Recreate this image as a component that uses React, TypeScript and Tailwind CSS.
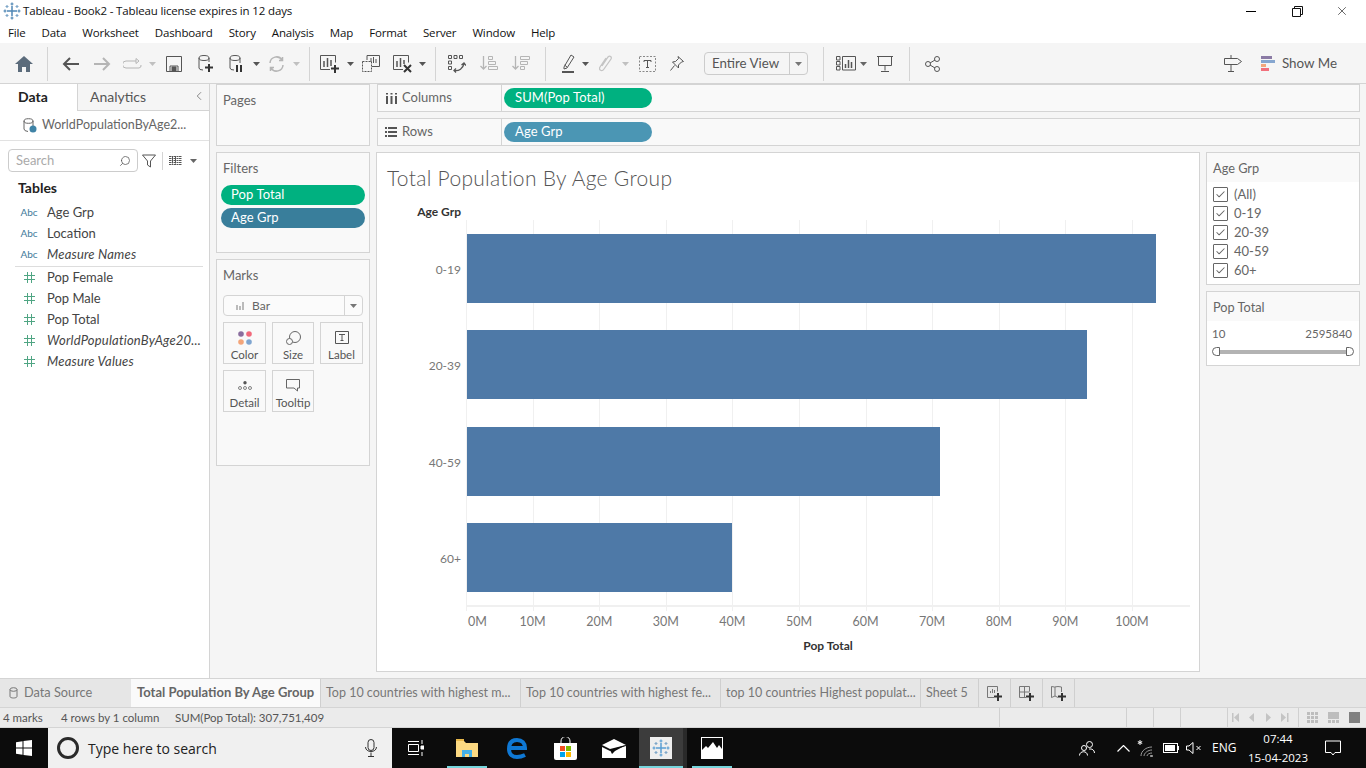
import type { ReactNode } from "react";
import { Check, ChevronLeft, Search, X } from "lucide-react";

const lato = { fontFamily: "Lato, sans-serif" };

const menuItems = ["File", "Data", "Worksheet", "Dashboard", "Story", "Analysis", "Map", "Format", "Server", "Window", "Help"];

const dims = [
  { name: "Age Grp" },
  { name: "Location" },
  { name: "Measure Names", italic: true },
];
const measures = [
  { name: "Pop Female" },
  { name: "Pop Male" },
  { name: "Pop Total" },
  { name: "WorldPopulationByAge20...", italic: true },
  { name: "Measure Values", italic: true },
];

const bars = [
  { label: "0-19", width: 689 },
  { label: "20-39", width: 620 },
  { label: "40-59", width: 473 },
  { label: "60+", width: 265 },
];
const ticks = ["0M", "10M", "20M", "30M", "40M", "50M", "60M", "70M", "80M", "90M", "100M"];

const dark = "#555555";
const faded = "#b5b5b5";

function Svg({ w = 20, h = 20, children }: { w?: number; h?: number; children: ReactNode }) {
  return (
    <svg width={w} height={h} viewBox={`0 0 ${w} ${h}`} fill="none" stroke={dark} strokeWidth="1">
      {children}
    </svg>
  );
}

function Tool({ className, children }: { className: string; children?: ReactNode }) {
  return <div className={`flex shrink-0 items-center justify-center ${className}`}>{children}</div>;
}

function Caret({ color = "#777777" }: { color?: string }) {
  return (
    <svg width="7" height="4" viewBox="0 0 7 4">
      <path d="M0 0h7L3.5 4z" fill={color} />
    </svg>
  );
}

function Sep() {
  return <div className="h-[34px] w-px shrink-0 bg-[#d4d4d4]" />;
}

function Plus({ x, y }: { x: number; y: number }) {
  return <path d={`M${x} ${y + 3.5}h8M${x + 4} ${y}v8`} stroke="#333333" strokeWidth="2" />;
}

function TableauLogo({ size = 18, color = "#4f87b5" }: { size?: number; color?: string }) {
  return (
    <svg width={size} height={size} viewBox="0 0 18 18" stroke={color} strokeWidth="1.2" fill="none">
      <path d="M9 4v10M4 9h10" strokeWidth="1.5" />
      <path d="M9 0.5v3M7.5 2h3M9 14.5v3M7.5 16h3M0.5 9h3M2 7.5v3M14.5 9h3M16 7.5v3" />
      <path d="M4 3v3M2.5 4.5h3M14 3v3M12.5 4.5h3M4 12v3M2.5 13.5h3M14 12v3M12.5 13.5h3" stroke="#7fa7c9" />
    </svg>
  );
}

function Pill({ color, label, className }: { color: string; label: string; className: string }) {
  return (
    <div className={`flex h-5 items-center rounded-full text-[13px] tracking-[0.1px] text-white ${color} ${className}`}>
      {label}
    </div>
  );
}

function Card({ title, className, children }: { title: string; className: string; children?: ReactNode }) {
  return (
    <div className={`shrink-0 border border-[#d4d4d4] bg-[#f9f9f9] ${className}`}>
      <div className="pl-[6px] pt-[7px] text-[13px] leading-4 text-[#666666]">{title}</div>
      {children}
    </div>
  );
}

function MarkButton({ label, className, children }: { label: string; className: string; children: ReactNode }) {
  return (
    <div className={`flex h-[42px] flex-col items-center border border-[#d4d4d4] ${className}`}>
      <div className="flex h-[26px] items-center pt-[3px]">{children}</div>
      <div className="text-[11.5px] leading-3 text-[#555555]">{label}</div>
    </div>
  );
}

function Shelf({ icon, label, pill, color }: { icon: ReactNode; label: string; pill: string; color: string }) {
  return (
    <div className="flex h-7 items-center border border-[#d4d4d4] bg-[#f9f9f9]">
      <div className="flex w-[124px] shrink-0 items-center self-stretch border-r border-[#d4d4d4]">
        <div className="flex w-[24px] justify-center pl-[2px]">{icon}</div>
        <span className="text-[13px] text-[#666666]">{label}</span>
      </div>
      <Pill color={color} label={pill} className="ml-[2px] w-[148px] pl-[11px]" />
    </div>
  );
}

function FieldRow({ name, italic, kind }: { name: string; italic?: boolean; kind: "abc" | "num" }) {
  return (
    <div className="flex h-[21px] items-center">
      <div className="flex w-[47px] justify-center pl-[18px] pr-[7px]">
        {kind === "abc" ? (
          <span className="text-[10px] text-[#3f7a9a]">Abc</span>
        ) : (
          <svg width="11" height="11" viewBox="0 0 11 11" stroke="#4fa583" strokeWidth="1">
            <path d="M3.5 0v11M7.5 0v11M0 3.5h11M0 7.5h11" />
          </svg>
        )}
      </div>
      <span className={`text-[13px] text-[#444444] ${italic ? "italic tracking-[0.2px]" : ""}`}>{name}</span>
    </div>
  );
}

function Sheet({ label, className }: { label: string; className: string }) {
  return (
    <div className={`flex shrink-0 items-center whitespace-nowrap border-r border-[#cfcfcf] pl-[5px] text-[12.5px] text-[#777777] ${className}`}>
      {label}
    </div>
  );
}

function AddTab({ children }: { children: ReactNode }) {
  return <div className="flex w-[32px] shrink-0 items-center justify-center border-r border-[#cfcfcf]">{children}</div>;
}

function StatusCell({ className }: { className: string }) {
  return <div className={`shrink-0 self-stretch border-r border-[#d0d0d0] ${className}`} />;
}

export default function App() {
  return (
    <div className="flex h-screen w-full flex-col overflow-hidden bg-white" style={lato}>
      {/* window title */}
      <div className="flex h-[22px] shrink-0 items-center bg-white" style={{ fontFamily: "'Open Sans', sans-serif" }}>
        <div className="ml-[3px] mr-[2px]">
          <TableauLogo size={18} />
        </div>
        <span className="text-[11.5px] tracking-[-0.15px] text-[#111111]">Tableau - Book2 - Tableau license expires in 12 days</span>
        <div className="ml-auto flex items-center text-black">
          <div className="flex w-[46px] justify-center">
            <div className="h-px w-[10px] bg-black" />
          </div>
          <div className="flex w-[46px] justify-center">
            <svg width="11" height="11" viewBox="0 0 11 11" fill="none" stroke="#111111">
              <path d="M0.5 2.5h8v8h-8zM2.5 2.5v-2h8v8h-2" />
            </svg>
          </div>
          <div className="flex w-[46px] justify-center pr-[2px]">
            <X size={14} strokeWidth={1} />
          </div>
        </div>
      </div>

      {/* menu */}
      <div className="flex h-[21px] shrink-0 items-center gap-[16px] bg-white pl-2 text-[11.5px] tracking-[-0.15px] text-[#111111]" style={{ fontFamily: "'Open Sans', sans-serif" }}>
        {menuItems.map((item) => (
          <span key={item}>{item}</span>
        ))}
      </div>

      {/* toolbar */}
      <div className="flex h-[41px] shrink-0 items-center border-b border-[#d4d4d4] bg-[#f5f5f5] pt-px">
        <Tool className="w-[47px]">
          <svg width="18" height="16" viewBox="0 0 18 16">
            <path d="M9 0L0 8h3v8h4v-5h4v5h4V8h3z" fill="#5b6b7b" />
          </svg>
        </Tool>
        <Sep />
        <Tool className="ml-[6px] w-[32px]">
          <svg width="17" height="14" viewBox="0 0 17 14" fill="none" stroke="#555555" strokeWidth="2">
            <path d="M17 7H2M8 1L2 7l6 6" />
          </svg>
        </Tool>
        <Tool className="w-[32px]">
          <svg width="17" height="14" viewBox="0 0 17 14" fill="none" stroke={faded} strokeWidth="2">
            <path d="M0 7h15M9 1l6 6-6 6" />
          </svg>
        </Tool>
        <Tool className="w-[28px]">
          <svg width="19" height="12" viewBox="0 0 19 12" fill="none" stroke={faded}>
            <path d="M13 3H3a2.5 2.5 0 000 7h13a2.5 2.5 0 002-3M13 0.5v5l3-2.5z" />
          </svg>
        </Tool>
        <Tool className="w-[12px]">
          <Caret color="#c0c0c0" />
        </Tool>
        <Tool className="w-[32px]">
          <Svg w={16} h={16}>
            <path d="M0.5 0.5h15v15h-15zM4 15v-5h8v5" />
            <path d="M6 11h4v4H6z" fill={dark} />
          </Svg>
        </Tool>
        <Tool className="w-[32px]">
          <Svg w={16} h={18}>
            <ellipse cx="6" cy="3" rx="5" ry="2.5" />
            <path d="M1 3v10q0 2 4 2M11 3v4" />
            <Plus x={7} y={9} />
          </Svg>
        </Tool>
        <Tool className="w-[30px]">
          <Svg w={16} h={18}>
            <ellipse cx="6" cy="3" rx="5" ry="2.5" />
            <path d="M1 3v10q0 2 4 2M11 3v5" />
            <path d="M8 10v7M12 10v7" stroke="#333333" strokeWidth="2" />
          </Svg>
        </Tool>
        <Tool className="w-[8px]">
          <Caret color="#555555" />
        </Tool>
        <Tool className="w-[32px]">
          <svg width="17" height="16" viewBox="0 0 17 16" fill="none" stroke={faded} strokeWidth="1.5">
            <path d="M2 7a6.5 6.5 0 0112-3M15 9a6.5 6.5 0 01-12 3M14.5 1v3.5H11M2.500 15v-3.500H6" />
          </svg>
        </Tool>
        <Tool className="w-[8px]">
          <Caret color="#c0c0c0" />
        </Tool>
        <div className="w-[9px] shrink-0" />
        <Sep />
        <Tool className="ml-[4px] w-[32px]">
          <Svg w={20} h={18}>
            <path d="M10 14.500H0.500V0.500h15v7" />
            <path d="M4 6v6M7.500 3v9M11 5v6" strokeWidth="1.500" />
            <Plus x={11} y={10} />
          </Svg>
        </Tool>
        <Tool className="w-[8px]">
          <Caret color="#555555" />
        </Tool>
        <Tool className="w-[34px]">
          <Svg w={18} h={17}>
            <path d="M5 5V0.500h12.500v11H10" />
            <path d="M0.500 6.500h9v10h-9z" strokeDasharray="2 1" />
            <path d="M9 7V3M11.500 8V2M14 8V4" />
          </Svg>
        </Tool>
        <Tool className="w-[28px]">
          <Svg w={19} h={18}>
            <path d="M10 14.500H0.500V0.500h15v7" />
            <path d="M4 6v6M7.500 3v9M11 5v4" strokeWidth="1.500" />
            <path d="M11 10l7 7M18 10l-7 7" stroke="#333333" strokeWidth="2" />
          </Svg>
        </Tool>
        <Tool className="w-[12px]">
          <Caret color="#555555" />
        </Tool>
        <div className="w-[7px] shrink-0" />
        <Sep />
        <Tool className="ml-[5px] w-[32px]">
          <Svg w={18} h={18}>
            <path d="M0.500 0.500h3v3h-3zM6 0.500h3v3H6zM11.500 0.500h3v3h-3zM0.500 6h3v3h-3zM0.500 11.500h3v3h-3z" />
            <path d="M6 15.500c5 1 9-2 10-7M13.500 10l2.500-2 2 2.500M8 13.500l-2 2 2 2" strokeWidth="1.300" />
          </Svg>
        </Tool>
        <Tool className="w-[32px]">
          <Svg w={18} h={15}>
            <path d="M3.500 0v12M0.500 10l3 3 3-3" stroke={faded} strokeWidth="1.300" />
            <path d="M8.500 0.500h4v3h-4zM8.500 5.500h7v3h-7zM8.500 10.500h9v3h-9z" stroke={faded} />
          </Svg>
        </Tool>
        <Tool className="w-[32px]">
          <Svg w={18} h={15}>
            <path d="M3.500 0v12M0.500 10l3 3 3-3" stroke={faded} strokeWidth="1.300" />
            <path d="M8.500 0.500h9v3h-9zM8.500 5.500h7v3h-7zM8.500 10.500h4v3h-4z" stroke={faded} />
          </Svg>
        </Tool>
        <div className="w-[8px] shrink-0" />
        <Sep />
        <Tool className="ml-[10px] w-[24px]">
          <svg width="13" height="19" viewBox="0 0 13 19" fill="none" stroke="#555555">
            <path d="M2 13L9 1l3 2-7 11-3 1zM2.500 11l2.500 2" />
            <path d="M0 18h12" strokeWidth="2" />
          </svg>
        </Tool>
        <Tool className="w-[10px]">
          <Caret color="#555555" />
        </Tool>
        <Tool className="w-[30px]">
          <svg width="13" height="17" viewBox="0 0 13 17" fill="none" stroke="#c4c4c4" strokeWidth="1.300">
            <path d="M3 11l6-9c2-2 4 0 3 2l-7 10c-2 3-6 1-4-2l6-9" />
          </svg>
        </Tool>
        <Tool className="w-[10px]">
          <Caret color="#c0c0c0" />
        </Tool>
        <Tool className="w-[34px]">
          <svg width="17" height="16" viewBox="0 0 17 16" fill="none" stroke="#888888">
            <path d="M0.500 0.500h16v15h-16z" strokeDasharray="2 1.500" />
            <path d="M5 4.500h7M8.500 4.500v7M7 11.500h3M5 4.500v1.500M12 4.500v1.500" stroke="#555555" />
          </svg>
        </Tool>
        <Tool className="w-[26px]">
          <svg width="14" height="15" viewBox="0 0 14 15" fill="none" stroke="#555555">
            <path d="M8 0.500l5.500 5-2 .500-3 3 0 3-6-6 3-.5 3-3zM4.500 9.500L0.500 14.500" />
          </svg>
        </Tool>
        <div className="ml-[14px] flex h-[23px] w-[104px] shrink-0 items-center rounded-sm border border-[#cccccc]">
          <span className="flex-1 pl-[7px] text-[13.3px] text-[#555555]">Entire View</span>
          <div className="flex h-full w-[18px] items-center justify-center border-l border-[#cccccc]">
            <Caret />
          </div>
        </div>
        <div className="w-[15px] shrink-0" />
        <Sep />
        <Tool className="ml-[10px] w-[24px]">
          <Svg w={20} h={15}>
            <path d="M0.500 0.500h3.500v3.500H0.500zM0.500 5.500h3.500V9H0.500zM0.500 10.500h3.500V14H0.500zM6.500 0.500h13v13.500h-13z" />
            <path d="M9.500 8v4M12.500 4v8M15.500 6v6" strokeWidth="1.500" />
          </Svg>
        </Tool>
        <Tool className="w-[10px]">
          <Caret color="#666666" />
        </Tool>
        <Tool className="w-[34px]">
          <Svg w={16} h={16}>
            <path d="M0 0.500h16M1.500 0.500v9h13v-9M8 9.500v5M4 15.500h8" />
          </Svg>
        </Tool>
        <div className="w-[7px] shrink-0" />
        <Sep />
        <Tool className="ml-[6px] w-[32px]">
          <Svg w={15} h={16}>
            <circle cx="3" cy="8" r="2.500" />
            <circle cx="12" cy="3" r="2.500" />
            <circle cx="12" cy="13" r="2.500" />
            <path d="M5 7l5-3M5 9l5 3" />
          </Svg>
        </Tool>
        <Tool className="ml-auto w-[20px]">
          <Svg w={18} h={17}>
            <path d="M0.500 3.500h13l4 3-4 3h-13zM7 0v3M7 9.500v7M4 16.500h6" />
          </Svg>
        </Tool>
        <div className="ml-[18px] flex flex-col gap-[1px]">
          <div className="h-[3px] w-[11px] bg-[#8b7ba5]" />
          <div className="h-[3px] w-[14px] bg-[#86a6cf]" />
          <div className="h-[3px] w-[5px] bg-[#f3a77c]" />
          <div className="h-[3px] w-[8px] bg-[#f2707c]" />
        </div>
        <span className="ml-[7px] mr-[29px] text-[13.4px] text-[#555555]">Show Me</span>
      </div>

      {/* body */}
      <div className="flex min-h-0 flex-1 bg-[#f5f5f5]">
        {/* data pane */}
        <div className="w-[210px] shrink-0 border-r border-[#d4d4d4] bg-white">
          <div className="flex h-[27px] bg-[#f5f5f5]">
            <div className="flex w-[77px] items-center bg-white pb-[2px] pl-[18px] text-[14px] font-bold text-[#222222]">Data</div>
            <div className="flex flex-1 items-center border-b border-l border-[#d4d4d4] pb-[2px] pl-[12px] text-[14px] text-[#555555]">
              Analytics
              <ChevronLeft size={14} strokeWidth={1.300} className="ml-auto mr-[3px] text-[#666666]" />
            </div>
          </div>
          <div className="flex h-[30px] items-center border-b border-[#e2e2e2] pl-[23px]">
            <svg width="14" height="15" viewBox="0 0 14 15" fill="none" stroke="#666666">
              <ellipse cx="5.500" cy="3" rx="4.500" ry="2.300" />
              <path d="M1 3v8q0 2 4 2.500M10 3v5" />
              <circle cx="10" cy="11" r="3.500" fill="#3f83a6" stroke="none" />
            </svg>
            <span className="ml-[5px] text-[12.5px] text-[#666666]">WorldPopulationByAge2...</span>
          </div>
          <div className="ml-2 mt-[8px] flex h-[23px] items-center">
            <div className="flex h-[23px] w-[130px] items-center rounded-sm border border-[#cccccc] pl-[7px] pr-[6px] text-[13px] text-[#aaaaaa]">
              Search
              <Search size={12} strokeWidth={1.500} className="ml-auto -scale-x-100 text-[#555555]" />
            </div>
            <svg width="14" height="14" viewBox="0 0 14 14" fill="none" stroke="#555555" className="ml-[4px]">
              <path d="M0.500 1h13L8.500 7v6l-3-2V7z" />
            </svg>
            <div className="ml-[6px] h-[18px] w-px bg-[#d4d4d4]" />
            <svg width="13" height="9" viewBox="0 0 13 9" stroke="#555555" className="ml-[6px]">
              <path d="M0 .5h13M0 2.500h13M0 4.500h13M0 6.500h13M0 8.500h13M3.500 0v9M6.500 0v9" strokeDasharray="2 .5" />
            </svg>
            <div className="ml-[8px]">
              <Caret color="#666666" />
            </div>
          </div>
          <div className="mt-[6px] pl-[18px] text-[14px] font-bold leading-[20px] text-[#222222]">Tables</div>
          <div className="mt-[4px]">
            {dims.map((f) => (
              <FieldRow key={f.name} name={f.name} italic={f.italic} kind="abc" />
            ))}
          </div>
          <div className="ml-[15px] mr-[6px] mt-[1px] h-px bg-[#dddddd]" />
          <div>
            {measures.map((f) => (
              <FieldRow key={f.name} name={f.name} italic={f.italic} kind="num" />
            ))}
          </div>
        </div>

        {/* cards */}
        <div className="ml-[6px] flex w-[154px] shrink-0 flex-col gap-[6px]">
          <Card title="Pages" className="h-[62px] border-t-[#d4d4d4]" />
          <Card title="Filters" className="h-[101px]">
            <div className="ml-[4px] mt-[9px] flex flex-col gap-[3px]">
              <Pill color="bg-[#00b180]" label="Pop Total" className="w-[144px] pl-[10px]" />
              <Pill color="bg-[#397e9b]" label="Age Grp" className="w-[144px] pl-[10px]" />
            </div>
          </Card>
          <Card title="Marks" className="h-[207px]">
            <div className="mx-[6px] mt-[12px] flex h-[21px] items-center rounded-sm border border-[#d4d4d4] bg-white/40">
              <div className="ml-[12px] flex items-end gap-[1px]">
                <div className="h-[5px] w-[2px] bg-[#bbbbbb]" />
                <div className="h-[4px] w-[2px] bg-[#bbbbbb]" />
                <div className="h-[8px] w-[2px] bg-[#bbbbbb]" />
              </div>
              <span className="ml-[8px] text-[12px] text-[#666666]">Bar</span>
              <div className="ml-auto flex h-full w-[18px] items-center justify-center border-l border-[#d4d4d4]">
                <Caret />
              </div>
            </div>
            <div className="mx-[6px] mt-[6px] flex gap-[6px]">
              <MarkButton label="Color" className="w-[43px]">
                <svg width="14" height="14" viewBox="0 0 14 14">
                  <circle cx="3" cy="3" r="2.800" fill="#8a6e9e" />
                  <circle cx="11" cy="3" r="2.800" fill="#f1697b" />
                  <circle cx="3" cy="11" r="2.800" fill="#f3a57a" />
                  <circle cx="11" cy="11" r="2.800" fill="#7fa5d0" />
                </svg>
              </MarkButton>
              <MarkButton label="Size" className="w-[42px]">
                <svg width="15" height="14" viewBox="0 0 15 14" fill="none" stroke="#666666">
                  <circle cx="9" cy="6" r="5.500" />
                  <circle cx="3.500" cy="10.500" r="3" fill="#f9f9f9" />
                </svg>
              </MarkButton>
              <MarkButton label="Label" className="w-[43px]">
                <svg width="14" height="13" viewBox="0 0 14 13" fill="none" stroke="#555555">
                  <path d="M0.500 0.500h13v12h-13zM4 3.500h6M7 3.500v6M5.500 9.500h3" />
                </svg>
              </MarkButton>
            </div>
            <div className="mx-[6px] mt-[6px] flex gap-[6px]">
              <MarkButton label="Detail" className="w-[43px]">
                <svg width="14" height="9" viewBox="0 0 14 9" fill="none" stroke="#666666" strokeWidth="0.800">
                  <circle cx="7" cy="1.700" r="1.700" fill="#555555" stroke="none" />
                  <circle cx="2" cy="7" r="1.500" />
                  <circle cx="7" cy="7" r="1.500" />
                  <circle cx="12" cy="7" r="1.500" />
                </svg>
              </MarkButton>
              <MarkButton label="Tooltip" className="w-[42px]">
                <svg width="14" height="13" viewBox="0 0 14 13" fill="none" stroke="#666666">
                  <path d="M0.500 0.500h13v8.500h-2v3l-3.500-3h-7.500z" />
                </svg>
              </MarkButton>
            </div>
          </Card>
        </div>

        {/* center and right */}
        <div className="ml-[6px] flex w-[984px] shrink-0 flex-col">
          <div className="ml-px flex flex-col gap-[6px]">
            <Shelf
              label="Columns"
              pill="SUM(Pop Total)"
              color="bg-[#00b180]"
              icon={
                <svg width="11" height="11" viewBox="0 0 11 11" fill="#555555">
                  <path d="M0 3h2v8H0zM4.500 3h2v8h-2zM9 3h2v8H9zM0 0h2v1.500H0zM4.500 0h2v1.500h-2zM9 0h2v1.500H9z" />
                </svg>
              }
            />
            <Shelf
              label="Rows"
              pill="Age Grp"
              color="bg-[#4b96b4]"
              icon={
                <svg width="12" height="10" viewBox="0 0 12 10" fill="#555555">
                  <path d="M0 0h2v2H0zM3 0h9v2H3zM0 4h2v2H0zM3 4h9v2H3zM0 8h2v2H0zM3 8h9v2H3z" />
                </svg>
              }
            />
          </div>
          <div className="mt-[6px] flex items-start gap-[6px]">
            {/* worksheet */}
            <div className="h-[520px] w-[824px] shrink-0 border border-[#d4d4d4] bg-white">
              <div className="ml-[10px] mt-[11px] text-[21px] font-light leading-[28px] tracking-[0.3px] text-[#555555]">
                Total Population By Age Group
              </div>
              <div className="mt-[12px] w-[84px] text-right text-[12px] font-bold leading-4 text-[#333333]">Age Grp</div>
              <div className="flex">
                <div className="w-[89px] shrink-0" />
                <div className="relative h-[387px] w-[724px] border-b-2 border-[#f0f0f0]">
                  <div className="absolute inset-0 flex">
                    {ticks.map((t) => (
                      <div key={t} className="h-full w-[66.6px] shrink-0 border-l border-[#f0f0f0]" />
                    ))}
                  </div>
                  <div className="relative flex flex-col gap-[27.300px] pt-[14px]">
                    {bars.map((b) => (
                      <div key={b.label} className="relative flex h-[69px] items-center">
                        <div className="absolute right-[729px] top-[26px] whitespace-nowrap text-[12px] leading-[20px] text-[#777777]">{b.label}</div>
                        <div className="ml-px h-full bg-[#4e79a7]" style={{ width: b.width }} />
                      </div>
                    ))}
                  </div>
                </div>
              </div>
              <div className="ml-[89px] flex">
                {ticks.map((t) => (
                  <div key={t} className="flex h-[4px] w-[66.6px] shrink-0 justify-start border-l border-[#f0f0f0]" />
                ))}
              </div>
              <div className="ml-[89px] mt-[3px] flex">
                {ticks.map((t, i) => (
                  <div key={t} className="relative h-[16px] w-[66.6px] shrink-0 text-[12.500px] leading-4 text-[#777777]">
                    <span className={i === 0 ? "absolute left-[2px]" : "absolute left-0 -translate-x-1/2"}>{t}</span>
                  </div>
                ))}
              </div>
              <div className="mt-[8px] pl-[80px] text-center text-[12px] font-bold leading-4 text-[#333333]">Pop Total</div>
            </div>

            {/* legends */}
            <div className="flex w-[154px] shrink-0 flex-col gap-[6px]">
              <div className="border border-[#d4d4d4] bg-white">
                <div className="h-[29px] bg-[#f9f9f9] pl-[6px] pt-[7px] text-[12.75px] leading-4 text-[#666666]">Age Grp</div>
                <div className="pb-[4px] pl-[6px] pt-[3px]">
                  {["(All)", "0-19", "20-39", "40-59", "60+"].map((v) => (
                    <div key={v} className="flex h-[19px] items-center">
                      <div className="flex h-[15px] w-[15px] items-center justify-center rounded-[1px] border border-[#666666]">
                        <Check size={11} strokeWidth={2.200} className="text-[#666666]" />
                      </div>
                      <span className="ml-[6px] text-[13px] text-[#666666]">{v}</span>
                    </div>
                  ))}
                </div>
              </div>
              <div className="h-[75px] border border-[#d4d4d4] bg-white">
                <div className="h-[29px] bg-[#f9f9f9] pl-[6px] pt-[7px] text-[12.75px] leading-4 text-[#666666]">Pop Total</div>
                <div className="flex justify-between px-[5px] pr-[7px] pt-[5px] text-[11.5px] leading-4 text-[#666666]">
                  <span>10</span>
                  <span>2595840</span>
                </div>
                <div className="mx-[5px] mt-[5px] flex h-[9px] items-center">
                  <div className="h-[9px] w-[8px] rounded-l-full border border-[#666666] bg-white" />
                  <div className="h-[4px] flex-1 bg-[#b3b3b3]" />
                  <div className="h-[9px] w-[8px] rounded-r-full border border-[#666666] bg-white" />
                </div>
              </div>
            </div>
          </div>
        </div>
      </div>

      {/* sheet tabs */}
      <div className="flex h-[30px] shrink-0 border-y border-[#d4d4d4] bg-[#e6e6e6]">
        <div className="flex w-[131px] shrink-0 items-center pl-[9px] text-[12.75px] text-[#777777]">
          <svg width="9" height="12" viewBox="0 0 9 12" fill="none" stroke="#777777">
            <ellipse cx="4.500" cy="2.500" rx="3.500" ry="1.800" />
            <path d="M1 2.500v7c0 2 7 2 7 0v-7" />
          </svg>
          <span className="ml-[6px]">Data Source</span>
        </div>
        <div className="flex w-[190px] shrink-0 items-center border-r border-[#cfcfcf] bg-white/80 pl-[6px] text-[13px] font-bold text-[#666666]">
          Total Population By Age Group
        </div>
        <Sheet label="Top 10 countries with highest m..." className="w-[200px]" />
        <Sheet label="Top 10 countries with highest fe..." className="w-[200px]" />
        <Sheet label="top 10 countries Highest populat..." className="w-[200px]" />
        <Sheet label="Sheet 5" className="w-[58px]" />
        <AddTab>
          <Svg w={16} h={15}>
            <path d="M7 11.500H0.500V0.500h10v5" stroke="#777777" />
            <path d="M3.500 7V5M5.500 7V3M7.500 7V4" stroke="#777777" />
            <Plus x={7} y={7} />
          </Svg>
        </AddTab>
        <AddTab>
          <Svg w={16} h={15}>
            <path d="M7 11.500H0.500V0.500h10v5M0.500 6h10M5.500 0.500v11" stroke="#777777" />
            <Plus x={7} y={7} />
          </Svg>
        </AddTab>
        <AddTab>
          <Svg w={16} h={15}>
            <path d="M7 11.500l-3-1.500-3.500 1.500V0.500l3 .5 3.500-.5 3.500 .5v5M4 1v9" stroke="#777777" />
            <Plus x={7} y={7} />
          </Svg>
        </AddTab>
      </div>

      {/* status bar */}
      <div className="flex h-[20px] shrink-0 items-center border-b border-[#d4d4d4] bg-[#ebebeb] text-[11.5px] text-[#555555]">
        <span className="ml-[3px] w-[58px] shrink-0">4 marks</span>
        <span className="w-[114px] shrink-0">4 rows by 1 column</span>
        <span className="w-[824px] shrink-0">SUM(Pop Total): 307,751,409</span>
        <StatusCell className="w-0" />
        <StatusCell className="w-[127px]" />
        <StatusCell className="w-[27px]" />
        <StatusCell className="w-[27px]" />
        <StatusCell className="w-[47px]" />
        <div className="flex w-[71px] shrink-0 items-center justify-center gap-[8px] self-stretch border-r border-[#d0d0d0]">
          <svg width="62" height="9" viewBox="0 0 62 9" fill="#c4c4c4">
            <path d="M0 0h1.500v9H0zM7 0v9L2 4.500zM22 0v9l-5-4.500zM34 0v9l5-4.500zM49 0v9l5-4.500zM55 0h1.500v9H55z" />
          </svg>
        </div>
        <div className="ml-[8px] flex items-center gap-[10px]">
          <div className="grid grid-cols-3 gap-px">
            {[0, 1, 2, 3, 4, 5, 6, 7, 8].map((n) => (
              <div key={n} className="h-[3px] w-[3px] bg-[#bdbdbd]" />
            ))}
          </div>
          <div className="flex flex-col gap-px">
            <div className="h-[7px] w-[11px] bg-[#bdbdbd]" />
            <div className="flex gap-px">
              <div className="h-[3px] w-[3px] bg-[#bdbdbd]" />
              <div className="h-[3px] w-[3px] bg-[#bdbdbd]" />
              <div className="h-[3px] w-[3px] bg-[#bdbdbd]" />
            </div>
          </div>
          <div className="h-[11px] w-[11px] bg-[#808080]" />
        </div>
      </div>

      {/* windows taskbar */}
      <div className="flex h-[40px] shrink-0 items-center bg-[#0c0c0c] text-white" style={{ fontFamily: "'Open Sans', sans-serif" }}>
        <div className="flex w-[48px] shrink-0 justify-center">
          <svg width="16" height="16" viewBox="0 0 16 16" fill="#ffffff">
            <path d="M0 2.300l6.500-1v6.200H0zM7.500 1.100L16 0v7.500H7.500zM0 8.500h6.500v6.200l-6.500-1zM7.500 8.500H16V16l-8.500-1.100z" />
          </svg>
        </div>
        <div className="flex h-full w-[344px] shrink-0 items-center bg-[#f0f0f0] pl-[9px] text-[#222222]">
          <div className="h-[22px] w-[22px] rounded-full border-[3px] border-[#2a2a2a]" />
          <span className="ml-[9px] text-[14px]">Type here to search</span>
          <svg width="12" height="18" viewBox="0 0 12 18" fill="none" stroke="#333333" className="ml-auto mr-[15px]">
            <rect x="3" y="0.500" width="6" height="11" rx="3" />
            <path d="M0.500 8c0 6 11 6 11 0M6 13.500v3.500M3 17.500h6" />
          </svg>
        </div>
        <svg width="16" height="16" viewBox="0 0 16 16" fill="none" stroke="#ffffff" className="ml-[16px] shrink-0">
          <path d="M0.500 4.500h10v7h-10zM0 1.500h11M0 14.500h11M14 0v4M14 12v4" />
          <path d="M13 6h3v3h-3z" fill="#ffffff" />
        </svg>
        <div className="relative ml-[23px] flex h-full w-[40px] shrink-0 items-center justify-center">
          <svg width="22" height="18" viewBox="0 0 22 18">
            <path d="M0 2h8l2 2h12v14H0z" fill="#fcd982" />
            <path d="M0 0h8v2H0z" fill="#e8b84b" />
            <path d="M6 11h10v7h-3v-3H9v3H6z" fill="#45b0e8" />
          </svg>
          <div className="absolute inset-x-0 bottom-0 h-[2px] bg-[#76d5dc]" />
        </div>
        <div className="ml-[12px] flex h-full w-[35px] shrink-0 items-center justify-center">
          <svg width="20" height="21" viewBox="0 0 20 21" fill="none" stroke="#0f78d4" strokeWidth="4">
            <path d="M3 10h15c0-5-3-8-8-8S2 5 2 11s4 8 8 8c3 0 6-1 8-2" />
          </svg>
        </div>
        <div className="ml-[17px] flex h-full w-[28px] shrink-0 items-center justify-center">
          <svg width="23" height="23" viewBox="0 0 23 23">
            <path d="M7 6V4a4.500 4.500 0 019 0v2" fill="none" stroke="#ffffff" />
            <path d="M0 6h23v15a2 2 0 01-2 2H2a2 2 0 01-2-2z" fill="#ffffff" />
            <path d="M6 9h5v5H6z" fill="#f25022" />
            <path d="M12 9h5v5h-5z" fill="#7fba00" />
            <path d="M6 15h5v5H6z" fill="#00a4ef" />
            <path d="M12 15h5v5h-5z" fill="#ffb900" />
          </svg>
        </div>
        <div className="ml-[23px] flex h-full w-[24px] shrink-0 items-center justify-center">
          <svg width="24" height="19" viewBox="0 0 24 19">
            <path d="M0 6L12 0l12 6L8 10z" fill="#ffffff" />
            <path d="M0 8l8 4 16-5v12H0z" fill="#ffffff" />
            <path d="M0 7l8 4 16-5-11 6-3 3-2-4z" fill="#0c0c0c" />
          </svg>
        </div>
        <div className="relative ml-[13px] flex h-full w-[44px] shrink-0 items-center justify-center bg-[#3c3c3c]">
          <div className="flex h-[22px] w-[22px] items-center justify-center bg-[#eeeeee]">
            <TableauLogo size={18} color="#5a9fd4" />
          </div>
          <div className="absolute inset-x-0 bottom-0 h-[2px] bg-[#76d5dc]" />
        </div>
        <div className="h-full w-[4px] shrink-0 bg-[#2a2a2a]" />
        <div className="relative ml-[5px] flex h-full w-[40px] shrink-0 items-center justify-center">
          <svg width="22" height="22" viewBox="0 0 22 22">
            <path d="M0 0h22v22H0z" fill="#ffffff" />
            <path d="M1 1h20v11l-3-4-2 3-4-6-5 6-2-2-4 4z" fill="#0c0c0c" />
          </svg>
          <div className="absolute inset-x-0 bottom-0 h-[2px] bg-[#76d5dc]" />
        </div>
        {/* tray */}
        <svg width="16" height="15" viewBox="0 0 16 15" fill="none" stroke="#ffffff" className="ml-[347px] shrink-0">
          <circle cx="10.500" cy="3.500" r="3" />
          <circle cx="5" cy="7" r="2.500" />
          <path d="M0.500 14.500c0-5 8-5 8 0M10 8c3-.5 5.500 1 5.500 4" />
        </svg>
        <svg width="13" height="7" viewBox="0 0 13 7" fill="none" stroke="#ffffff" strokeWidth="1.200" className="ml-[22px] shrink-0">
          <path d="M0.500 6.500l6-6 6 6" />
        </svg>
        <svg width="16" height="17" viewBox="0 0 16 17" fill="none" stroke="#9a9a9a" className="ml-[7px] shrink-0">
          <path d="M4 16C4 11 9 7 15 7M7 16c0-3 4-6 8-6M10 16c0-2 3-3 5-3" />
          <path d="M13.500 15.500h2v1h-2z" fill="#9a9a9a" />
          <path d="M3 0v5M0.800 1.500l4.400 2M5.200 1.500l-4.400 2" stroke="#ffffff" />
        </svg>
        <div className="ml-[10px] flex h-[10px] w-[15px] shrink-0 items-center border border-white p-px">
          <div className="h-full w-[10px] bg-white" />
        </div>
        <div className="h-[4px] w-px shrink-0 bg-white" />
        <svg width="16" height="12" viewBox="0 0 16 12" fill="none" stroke="#ffffff" className="ml-[7px] shrink-0">
          <path d="M0.500 4v4h2.500l4 3.500V0.500L3 4z" />
          <path d="M10.500 4l4 4M14.500 4l-4 4" />
        </svg>
        <span className="ml-[10px] w-[28px] shrink-0 text-[12px]">ENG</span>
        <div className="ml-[7px] flex w-[62px] shrink-0 flex-col items-center text-[11.5px] leading-[19px]">
          <span>07:44</span>
          <span className="whitespace-nowrap">15-04-2023</span>
        </div>
        <svg width="16" height="16" viewBox="0 0 16 16" fill="none" stroke="#ffffff" className="ml-[16px] shrink-0">
          <path d="M0.500 1h15v11.500H10l-2 2.500-2-2.500H.5z" />
        </svg>
      </div>
    </div>
  );
}
